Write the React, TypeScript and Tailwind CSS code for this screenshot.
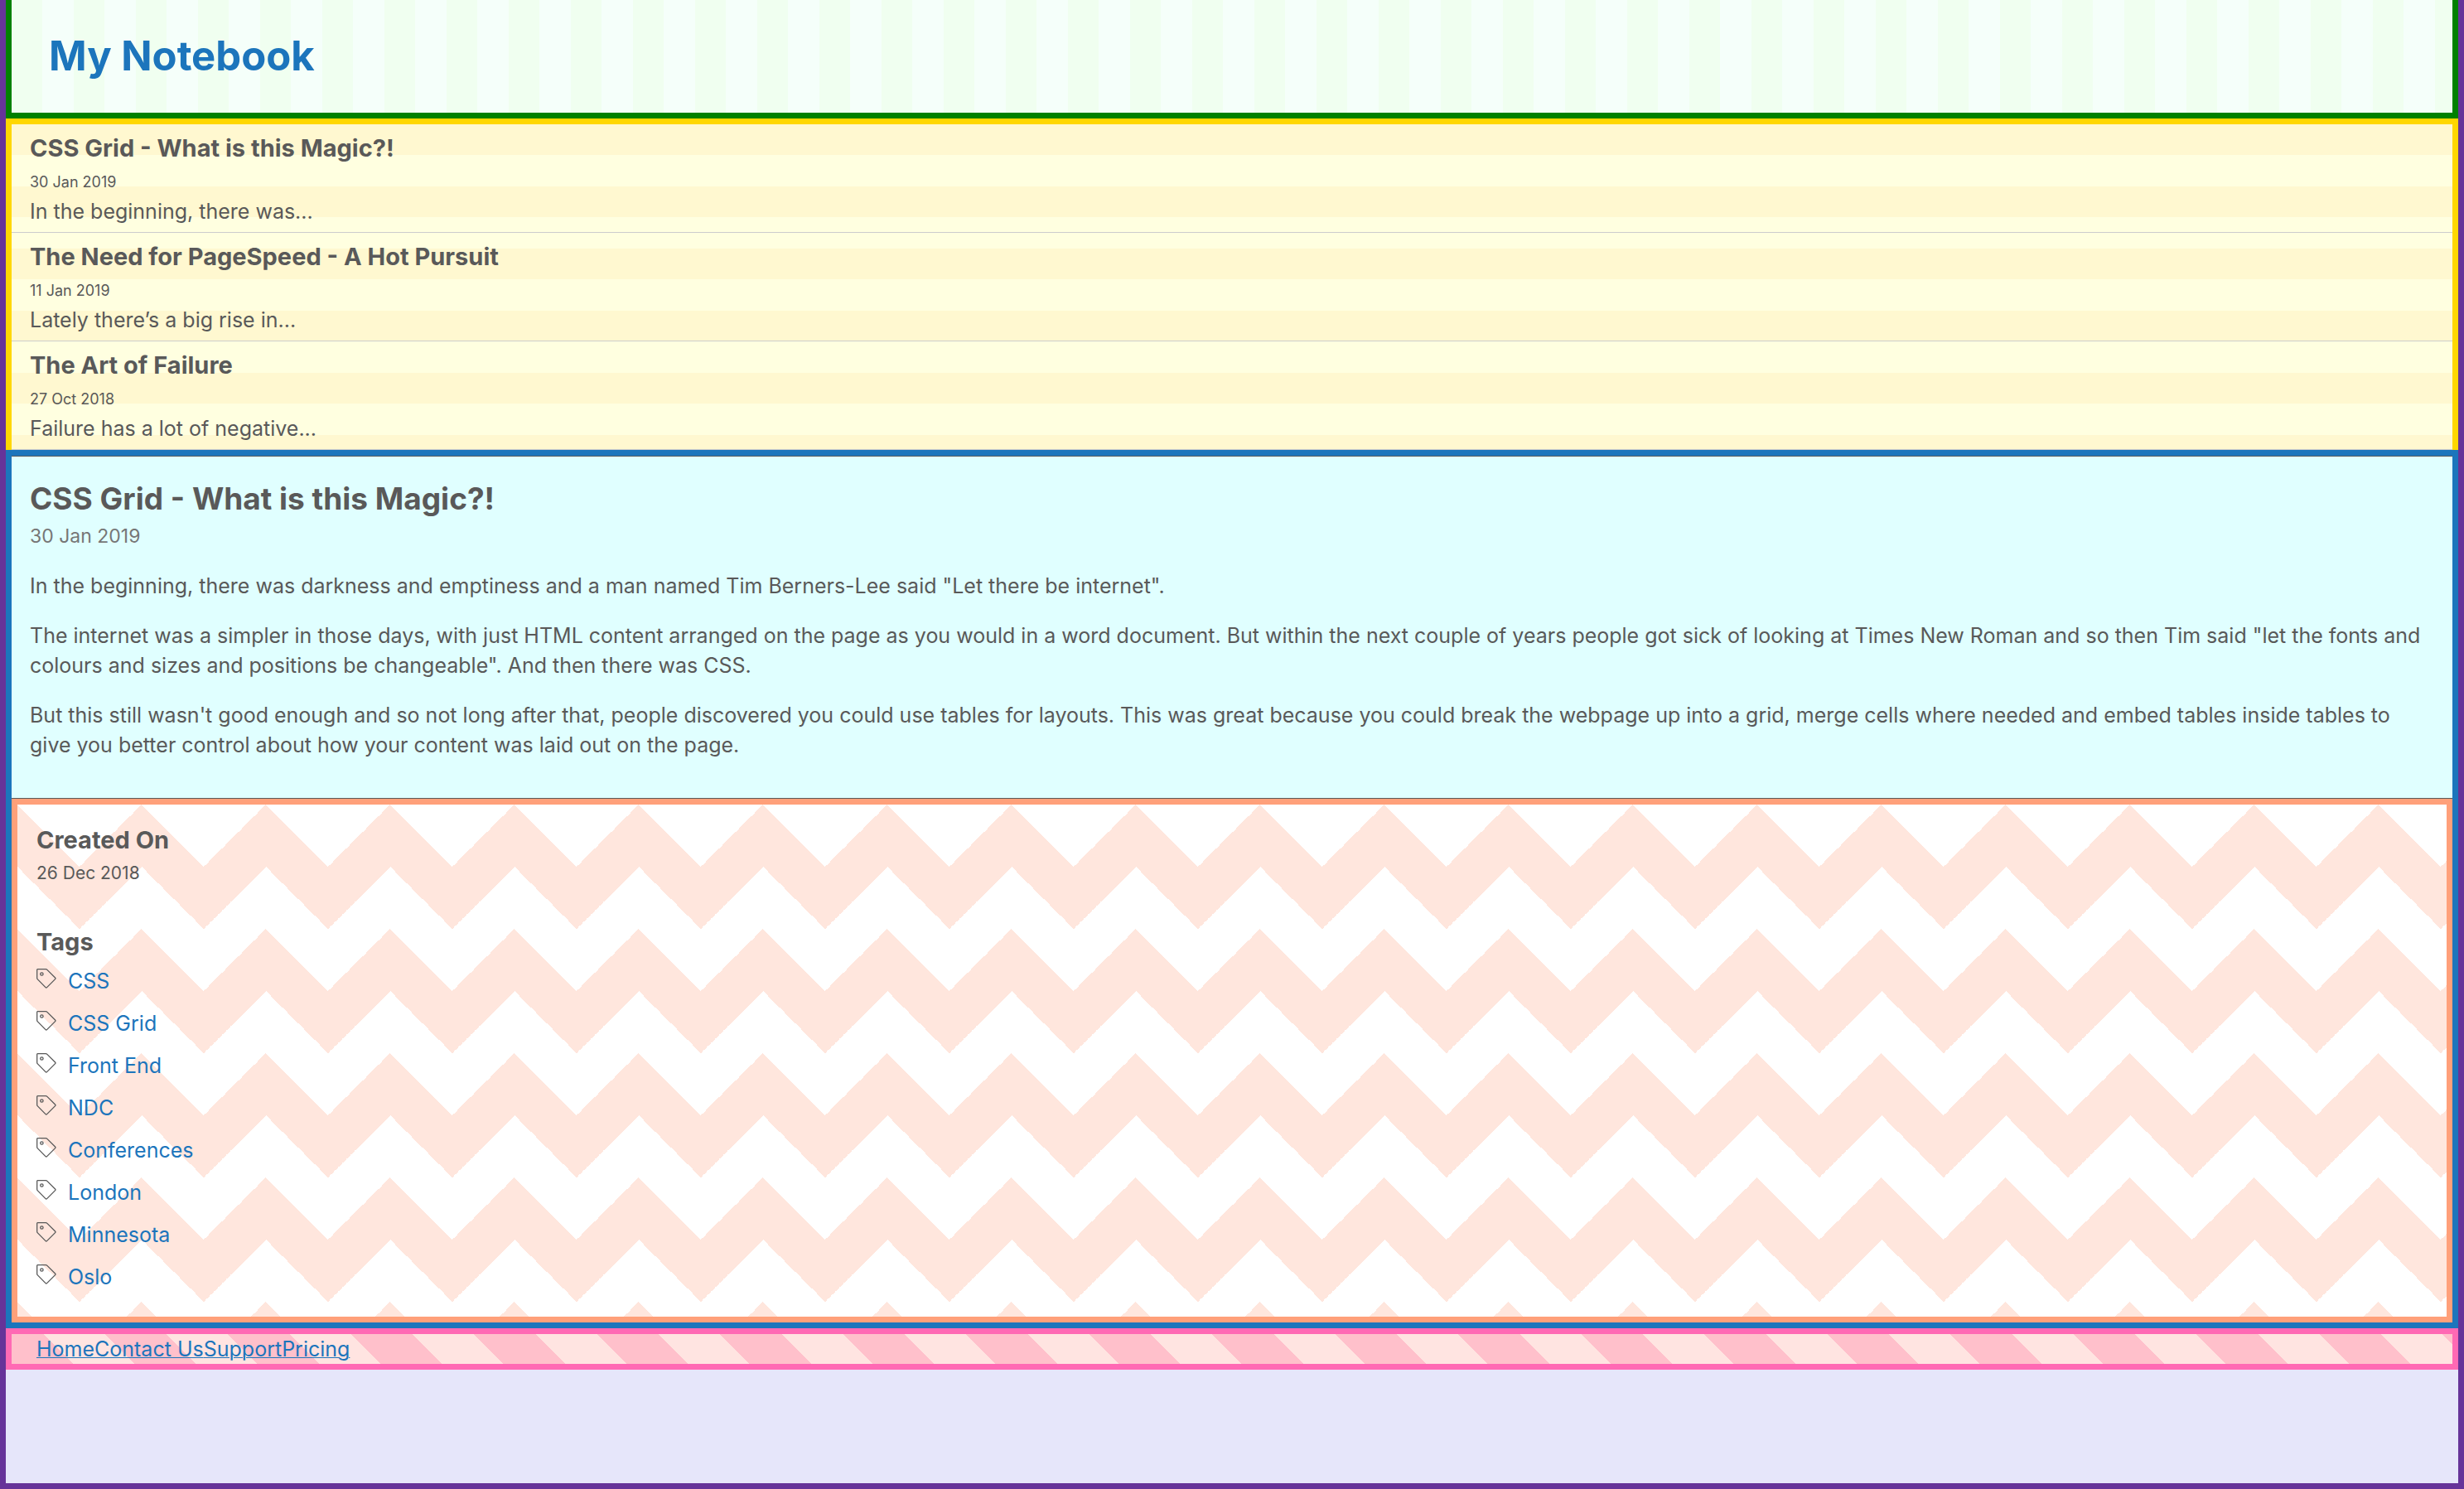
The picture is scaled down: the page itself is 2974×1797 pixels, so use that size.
const posts = [
  { title: "CSS Grid - What is this Magic?!", date: "30 Jan 2019", excerpt: "In the beginning, there was..." },
  { title: "The Need for PageSpeed - A Hot Pursuit", date: "11 Jan 2019", excerpt: "Lately there’s a big rise in..." },
  { title: "The Art of Failure", date: "27 Oct 2018", excerpt: "Failure has a lot of negative..." },
];

const paragraphs = [
  'In the beginning, there was darkness and emptiness and a man named Tim Berners-Lee said "Let there be internet".',
  'The internet was a simpler in those days, with just HTML content arranged on the page as you would in a word document. But within the next couple of years people got sick of looking at Times New Roman and so then Tim said "let the fonts and colours and sizes and positions be changeable". And then there was CSS.',
  "But this still wasn't good enough and so not long after that, people discovered you could use tables for layouts. This was great because you could break the webpage up into a grid, merge cells where needed and embed tables inside tables to give you better control about how your content was laid out on the page.",
];

const tags = ["CSS", "CSS Grid", "Front End", "NDC", "Conferences", "London", "Minnesota", "Oslo"];

const footerLinks = ["Home", "Contact Us", "Support", "Pricing"];

function TagIcon() {
  return (
    <svg viewBox="0 0 24 24" className="size-6 shrink-0" fill="none" stroke="currentColor" strokeWidth="1.3" aria-hidden="true">
      <path d="M1.3 0.7H11.2Q12.2 0.7 12.9 1.4L22.6 11Q23.4 11.8 22.6 12.6L12.6 22.6Q11.8 23.4 11 22.6L1.4 12.9Q0.7 12.2 0.7 11.2V1.3Q0.7 0.7 1.3 0.7Z" />
      <circle cx="6.4" cy="6.5" r="1.7" />
    </svg>
  );
}

function Header() {
  return (
    <header className="border-x-7 border-b-7 border-[#008000] bg-[linear-gradient(90deg,#f0fff0_50%,#f5fffa_50%)] bg-[length:75px_100%] px-[45px] py-8">
      <h1 className="text-[49px] leading-[72px] font-bold text-[#1c75bc]">My Notebook</h1>
    </header>
  );
}

function PostList() {
  return (
    <section
      aria-label="Posts"
      className="border-x-7 border-t-7 border-[#ffd700] bg-[linear-gradient(180deg,#fff8d0_50%,#ffffe0_50%)] bg-[length:100%_75px]"
    >
      {posts.map((post) => (
        <article key={post.title} className="border-b border-[#cccccc] px-[22px] pt-[7px] pb-[9px]">
          <h3 className="text-[29px] leading-[44px] font-bold">{post.title}</h3>
          <p className="text-[18px] leading-[38px]">{post.date}</p>
          <p className="text-[25px] leading-8">{post.excerpt}</p>
        </article>
      ))}
    </section>
  );
}

function PostBody() {
  return (
    <article className="border-y border-[#595959] bg-[#e0ffff] px-[22px] pt-6 pb-[46px]">
      <h2 className="text-[37px] leading-[54px] font-bold">{posts[0].title}</h2>
      <p className="text-[23px] leading-9 text-[#767676]">{posts[0].date}</p>
      {paragraphs.map((text) => (
        <p key={text} className="mt-6 text-[25px] leading-9">
          {text}
        </p>
      ))}
    </article>
  );
}

function Details() {
  return (
    <aside className="border-7 border-[#ffa07a] bg-white bg-[linear-gradient(135deg,#ffe6dd_25%,transparent_25%),linear-gradient(225deg,#ffe6dd_25%,transparent_25%),linear-gradient(315deg,#ffe6dd_25%,transparent_25%),linear-gradient(45deg,#ffe6dd_25%,transparent_25%)] [background-position:75px_75px,75px_75px,0_75px,0_75px] [background-size:150px_150px] px-[23px] pt-[21px] pb-[22px]">
      <h4 className="text-[29px] leading-[44px] font-bold">Created On</h4>
      <p className="text-[21px] leading-9">26 Dec 2018</p>
      <h4 className="mt-[43px] text-[29px] leading-[44px] font-bold">Tags</h4>
      <ul>
        {tags.map((tag) => (
          <li key={tag} className="flex items-start gap-[14px] py-[10px]">
            <TagIcon />
            <a href="#" className="text-[25px] leading-[31px] text-[#1c75bc]">
              {tag}
            </a>
          </li>
        ))}
      </ul>
    </aside>
  );
}

function Footer() {
  return (
    <footer className="border-7 border-[#ff69b4] bg-[repeating-linear-gradient(45deg,#ffc0cb_0,#ffc0cb_calc(105px/2),#ffe4e1_calc(105px/2),#ffe4e1_105px)] px-[30px]">
      <nav aria-label="Footer" className="flex">
        {footerLinks.map((link) => (
          <a key={link} href="#" className="text-[25px] leading-9 text-[#1c75bc] underline decoration-1">
            {link}
          </a>
        ))}
      </nav>
    </footer>
  );
}

export default function App() {
  return (
    <div className="min-h-screen border-x-7 border-b-7 border-[#663399] bg-[#e6e6fa] font-[Inter,sans-serif] text-[#595959]">
      <Header />
      <PostList />
      <main className="border-7 border-[#1c75bc]">
        <PostBody />
        <Details />
      </main>
      <Footer />
    </div>
  );
}
